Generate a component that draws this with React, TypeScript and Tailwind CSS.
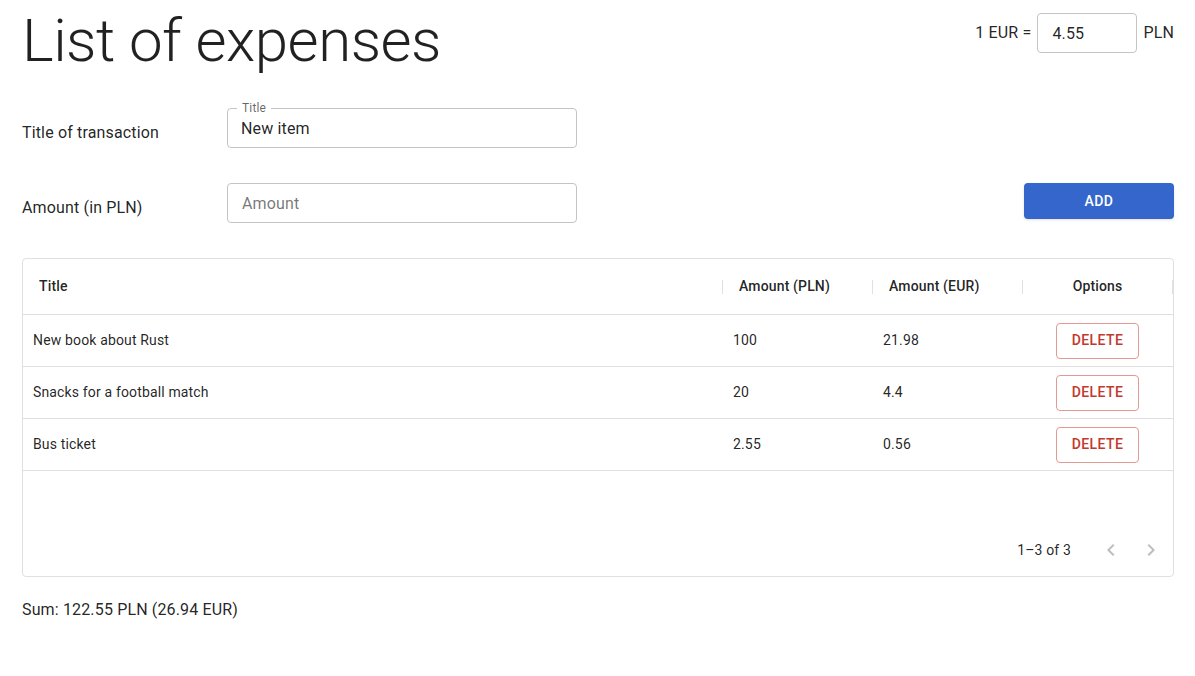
import React from 'react';

const rows = [
  { title: 'New book about Rust', pln: '100', eur: '21.98' },
  { title: 'Snacks for a football match', pln: '20', eur: '4.4' },
  { title: 'Bus ticket', pln: '2.55', eur: '0.56' },
];

function Separator() {
  return <div className="w-px h-[14px] bg-[#e0e0e0] shrink-0" />;
}

function DeleteButton() {
  return (
    <button className="h-[36px] px-[15px] rounded-[4px] border border-[#e29a95] text-[#c4392e] text-[14px] font-medium tracking-[0.4px] uppercase">
      Delete
    </button>
  );
}

export default function App() {
  return (
    <div
      className="min-h-screen bg-white text-[rgba(0,0,0,0.87)] pl-[22px] pr-[21px] pt-[5px] tracking-[0.15px]"
      style={{ fontFamily: 'Roboto, "Liberation Sans", sans-serif' }}
    >
      {/* header */}
      <div className="flex justify-between items-start">
        <h1 className="text-[60px] font-light leading-[72px] tracking-[-0.5px]">List of expenses</h1>
        <div className="flex items-center gap-[6px] mt-[8px] text-[16px]">
          <span>1 EUR =</span>
          <input
            defaultValue="4.55"
            className="w-[100px] h-[40px] px-[14px] rounded-[4px] border border-[#c4c4c4] outline-none text-[16px]"
          />
          <span>PLN</span>
        </div>
      </div>

      {/* form */}
      <div className="mt-[31px] flex flex-col gap-[35px]">
        <div className="flex items-center">
          <label className="w-[205px] text-[16px] pt-[10px]">Title of transaction</label>
          <div className="relative w-[350px] h-[40px] rounded-[4px] border border-[#c4c4c4]">
            <span className="absolute -top-[8px] left-[9px] px-[5px] bg-white text-[12px] leading-[14px] text-[rgba(0,0,0,0.6)]">
              Title
            </span>
            <input
              defaultValue="New item"
              className="w-full h-full px-[13px] bg-transparent outline-none text-[16px]"
            />
          </div>
        </div>
        <div className="flex items-center">
          <label className="w-[205px] text-[16px] pt-[10px]">Amount (in PLN)</label>
          <input
            placeholder="Amount"
            className="w-[350px] h-[40px] px-[14px] rounded-[4px] border border-[#c4c4c4] outline-none text-[16px] placeholder:text-[rgba(0,0,0,0.55)]"
          />
          <div className="flex-1" />
          <button className="w-[150px] h-[36px] self-start rounded-[4px] bg-[#3566cc] text-white text-[14px] font-medium tracking-[0.4px] uppercase shadow-sm">
            Add
          </button>
        </div>
      </div>

      {/* table */}
      <div className="mt-[35px] border border-[#e0e0e0] rounded-[4px] text-[14px]">
        <div className="flex h-[56px] items-center border-b border-[#e0e0e0] font-medium">
          <div className="flex-1 flex items-center justify-between pl-[16px]">
            <span>Title</span>
            <Separator />
          </div>
          <div className="w-[150px] flex items-center justify-between pl-[16px]">
            <span>Amount (PLN)</span>
            <Separator />
          </div>
          <div className="w-[150px] flex items-center justify-between pl-[16px]">
            <span>Amount (EUR)</span>
            <Separator />
          </div>
          <div className="w-[150px] flex items-center">
            <span className="flex-1 text-center">Options</span>
            <Separator />
          </div>
        </div>
        {rows.map((r) => (
          <div key={r.title} className="flex h-[52px] items-center border-b border-[#e0e0e0]">
            <div className="flex-1 pl-[10px]">{r.title}</div>
            <div className="w-[150px] pl-[10px]">{r.pln}</div>
            <div className="w-[150px] pl-[10px]">{r.eur}</div>
            <div className="w-[150px] flex justify-center pr-[1px]">
              <DeleteButton />
            </div>
          </div>
        ))}
        <div className="h-[53px]" />
        <div className="h-[52px] flex items-center justify-end pr-[2px]">
          <span>1–3 of 3</span>
          <div className="flex ml-[20px]">
            <button className="w-[40px] h-[40px] flex items-center justify-center text-[rgba(0,0,0,0.26)]">
              <svg width="24" height="24" viewBox="0 0 24 24" fill="currentColor">
                <path d="M15.41 16.59 10.83 12l4.58-4.59L14 6l-6 6 6 6 1.41-1.41z" />
              </svg>
            </button>
            <button className="w-[40px] h-[40px] flex items-center justify-center text-[rgba(0,0,0,0.26)]">
              <svg width="24" height="24" viewBox="0 0 24 24" fill="currentColor">
                <path d="M8.59 16.59 13.17 12 8.59 7.41 10 6l6 6-6 6-1.41-1.41z" />
              </svg>
            </button>
          </div>
        </div>
      </div>

      <p className="mt-[21px] text-[16px]">Sum: 122.55 PLN (26.94 EUR)</p>
    </div>
  );
}
